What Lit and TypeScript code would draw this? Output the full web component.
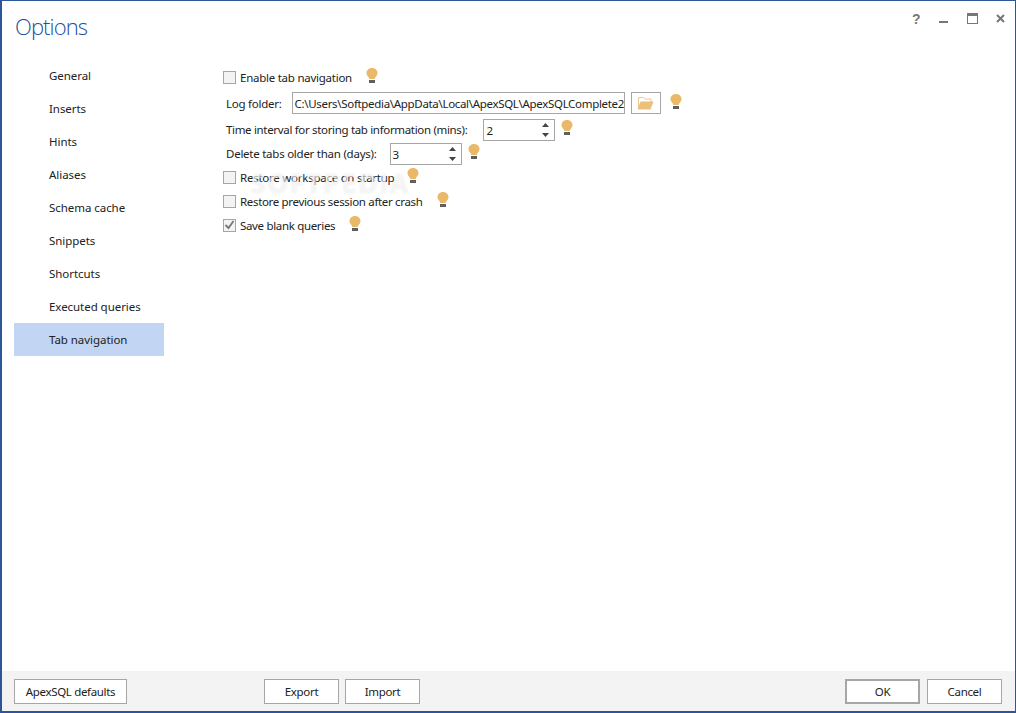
import { LitElement, html, css } from "lit";
import { customElement } from "lit/decorators.js";

const bulb = html`<svg class="bulb" width="12" height="15" viewBox="0 0 12 15"><path d="M6 0C2.800 0 .5 2.200 .5 5c0 1.900 1 3 1.900 4.100.6.7.8 1.400.9 1.900h5.400c.1-.5.3-1.200.9-1.900C10.500 8 11.500 6.900 11.500 5 11.500 2.200 9.200 0 6 0z" fill="#e9b868"/><rect x="3" y="12" width="6" height="3" fill="#5f5f5f"/></svg>`;

const spin = html`<div class="spin"><svg width="7" height="4" viewBox="0 0 7 4"><path d="M3.500 0L7 4H0z" fill="#444"/></svg><svg width="7" height="4" viewBox="0 0 7 4"><path d="M0 0h7L3.500 4z" fill="#444"/></svg></div>`;

const folder = html`<svg width="17" height="14" viewBox="0 0 17 14"><path d="M1.500 12V1.500h5l1.500 1.500h6v3" fill="none" stroke="#ecc88e" stroke-width="1"/><path d="M0.500 13.500L3.500 5.500h13L13.500 13.500z" fill="#ecc07a"/></svg>`;

@customElement("app-root")
export class AppRoot extends LitElement {
  static styles = css`
    :host { display: block; width: 1016px; height: 713px; font-family: "Noto Sans", "Open Sans", sans-serif; font-size: 11.500px; color: #222; }
    .win { position: relative; box-sizing: border-box; width: 1016px; height: 713px; border: 1px solid #2b579a; border-width: 1px 1px 2px 2px; background: #fff; display: flex; flex-direction: column; overflow: hidden; }
    .top { height: 58px; display: flex; justify-content: space-between; flex: none; }
    .title { font-family: "Open Sans", sans-serif; font-weight: 300; font-size: 22px; letter-spacing: -0.9px; color: #22509c; margin: 10px 0 0 13px; line-height: 30px; }
    .icons { display: flex; margin: 12px 0 0 0; padding-right: 10px; align-items: flex-start; }
    .q { font: bold 14px "Liberation Sans", sans-serif; color: #777; line-height: 12px; width: 27px; margin-left: -1px; }
    .min { margin-top: 8px; margin-right: 19px; }
    .max { margin-right: 18px; }
    .close { margin-top: 1px; }
    .body { flex: 1; display: flex; min-height: 0; }
    .nav { width: 150px; margin-left: 12px; flex: none; letter-spacing: -0.05px; }
    .nav div { height: 33px; line-height: 33px; padding-left: 35px; color: #222; }
    .nav .sel { background: #c2d5f2; }
    .form { margin-left: 59px; display: flex; flex-direction: column; padding-top: 5px; letter-spacing: -0.25px; }
    .row { display: flex; align-items: center; height: 24px; white-space: nowrap; }
    .tall { height: 26px; }
    .r3 { height: 26px; margin-bottom: -1px; }
    .check { box-sizing: border-box; width: 13px; height: 13px; border: 1px solid #a6a6a6; background: #f3f3f3; margin-right: 4px; display: flex; align-items: center; justify-content: center; }
    .lab { margin-left: 3px; }
    .tight { letter-spacing: -0.33px; }
    .bulb { display: block; margin-bottom: 3px; }
    .gap { margin-left: 13px; display: block; }
    .gap1 { margin-left: 14px; display: block; }
    .input { box-sizing: border-box; height: 22px; border: 1px solid #a6a6a6; display: flex; align-items: center; overflow: hidden; background: #fff; }
    .path { width: 333px; margin-left: 10px; padding-left: 2px; letter-spacing: -0.32px; flex: none; }
    .fbtn { box-sizing: border-box; width: 30px; height: 22px; border: 1px solid #a6a6a6; margin: 0 9px 0 6px; display: flex; align-items: center; justify-content: center; }
    .num { width: 72px; justify-content: space-between; margin-top: 2px; margin-right: 6px; padding-left: 2px; }
    .n1 { margin-left: 16px; }
    .n2 { margin-left: 13px; }
    .spin { display: flex; flex-direction: column; gap: 6px; margin-right: 5px; }
    .spin svg { display: block; }
    .foot { box-sizing: border-box; height: 40px; flex: none; background: #f3f3f3; display: flex; align-items: flex-start; padding: 8px 13px 0 12px; letter-spacing: -0.33px; }
    .btn { box-sizing: border-box; height: 25px; width: 75px; border: 1px solid #a6a6a6; background: #fff; display: flex; align-items: center; justify-content: center; color: #222; flex: none; }
    .def { width: 113px; }
    .exp { margin-left: 137px; }
    .imp { margin-left: 6px; }
    .ok { margin-left: 425px; border-width: 2px; }
    .can { margin-left: 7px; }
    .mark { position: absolute; left: 249px; top: 164px; font: bold 26px "Open Sans", sans-serif; letter-spacing: 2px; color: rgba(255,255,255,.6); text-shadow: 0 0 2px rgba(0,0,0,.1); pointer-events: none; }
  `;

  render() {
    const items = ["General","Inserts","Hints","Aliases","Schema cache","Snippets","Shortcuts","Executed queries","Tab navigation"];
    return html`<div class="win">
      <div class="top">
        <div class="title">Options</div>
        <div class="icons">
          <div class="q">?</div>
          <svg class="min" width="9" height="2" viewBox="0 0 9 2"><rect width="9" height="2" fill="#777"/></svg>
          <svg class="max" width="11" height="11" viewBox="0 0 11 11"><rect x=".5" y=".5" width="10" height="10" fill="none" stroke="#777"/><rect width="11" height="3" fill="#777"/></svg>
          <svg class="close" width="9" height="9" viewBox="0 0 9 9"><path d="M1 1l7 7M8 1l-7 7" stroke="#777" stroke-width="2"/></svg>
        </div>
      </div>
      <div class="body">
        <div class="nav">${items.map((t,i)=>html`<div class=${i===8?"sel":""}>${t}</div>`)}</div>
        <div class="form">
          <div class="row tall"><div class="check"></div><span>Enable tab navigation</span><span class="gap1">${bulb}</span></div>
          <div class="row tall"><span class="lab">Log folder:</span><div class="input path">C:\\Users\\Softpedia\\AppData\\Local\\ApexSQL\\ApexSQLComplete2016</div><div class="fbtn">${folder}</div>${bulb}</div>
          <div class="row r3"><span class="lab tight">Time interval for storing tab information (mins):</span><div class="input num n1">2${spin}</div>${bulb}</div>
          <div class="row"><span class="lab">Delete tabs older than (days):</span><div class="input num n2">3${spin}</div>${bulb}</div>
          <div class="row"><div class="check"></div><span>Restore workspace on startup</span><span class="gap">${bulb}</span></div>
          <div class="row"><div class="check"></div><span class="tight">Restore previous session after crash</span><span class="gap1">${bulb}</span></div>
          <div class="row"><div class="check"><svg width="11" height="10" viewBox="0 0 11 10"><path d="M1.500 5l3 3 5-7" fill="none" stroke="#777" stroke-width="1.800"/></svg></div><span class="tight">Save blank queries</span><span class="gap1">${bulb}</span></div>
        </div>
      </div>
      <div class="foot">
        <div class="btn def">ApexSQL defaults</div>
        <div class="btn exp">Export</div>
        <div class="btn imp">Import</div>
        <div class="btn ok">OK</div>
        <div class="btn can">Cancel</div>
      </div>
      <div class="mark">SOFTPEDIA</div>
    </div>`;
  }
}
